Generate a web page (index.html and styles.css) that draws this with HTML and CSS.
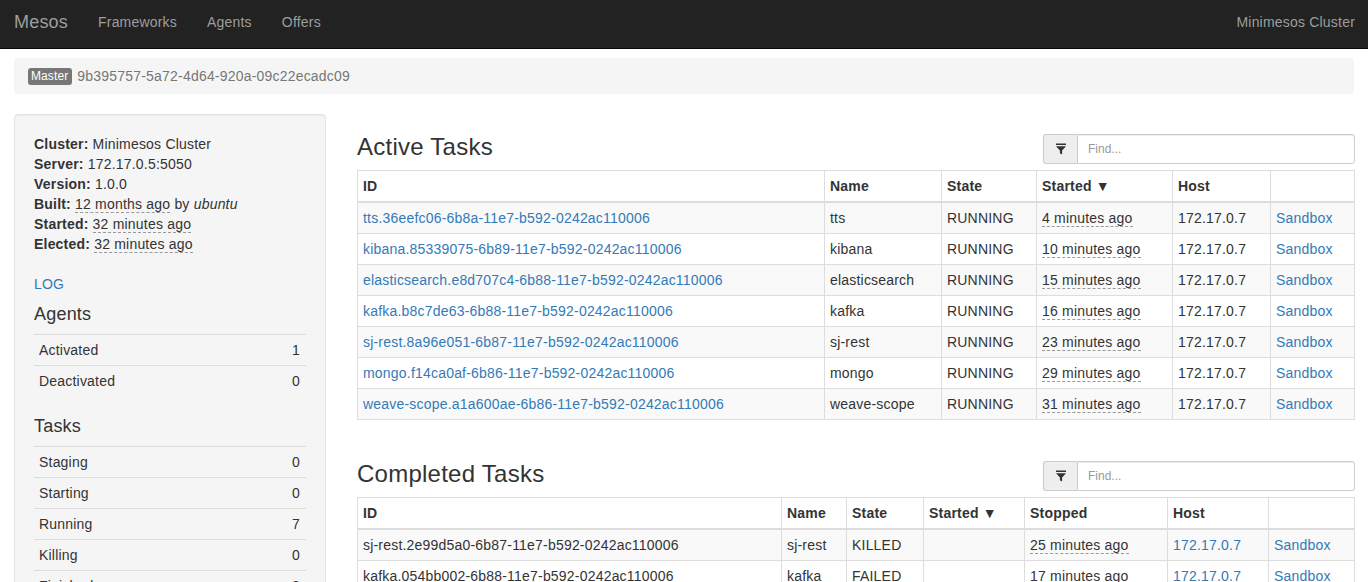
FILE: index.html
```html
<!DOCTYPE html>
<html lang="en">
<head>
<meta charset="utf-8">
<title>Mesos</title>
<link rel="stylesheet" href="styles.css">
</head>
<body>
<nav class="navbar">
  <div class="nav-left">
    <a class="brand" href="#">Mesos</a>
    <a class="nav-link" href="#">Frameworks</a>
    <a class="nav-link" href="#">Agents</a>
    <a class="nav-link" href="#">Offers</a>
  </div>
  <a class="nav-link nav-right" href="#">Minimesos Cluster</a>
</nav>

<div class="container">
  <div class="breadcrumb"><span class="label">Master</span> 9b395757-5a72-4d64-920a-09c22ecadc09</div>

  <div class="layout">
    <aside class="well">
      <dl class="info">
        <div><dt>Cluster:</dt> <dd>Minimesos Cluster</dd></div>
        <div><dt>Server:</dt> <dd>172.17.0.5:5050</dd></div>
        <div><dt>Version:</dt> <dd>1.0.0</dd></div>
        <div><dt>Built:</dt> <dd><span class="ts">12 months ago</span> by <em>ubuntu</em></dd></div>
        <div><dt>Started:</dt> <dd><span class="ts">32 minutes ago</span></dd></div>
        <div><dt>Elected:</dt> <dd><span class="ts">32 minutes ago</span></dd></div>
      </dl>
      <p class="log"><a href="#">LOG</a></p>
      <h4>Agents</h4>
      <table class="side-table">
        <tr><td>Activated</td><td class="num">1</td></tr>
        <tr><td>Deactivated</td><td class="num">0</td></tr>
      </table>
      <h4>Tasks</h4>
      <table class="side-table">
        <tr><td>Staging</td><td class="num">0</td></tr>
        <tr><td>Starting</td><td class="num">0</td></tr>
        <tr><td>Running</td><td class="num">7</td></tr>
        <tr><td>Killing</td><td class="num">0</td></tr>
        <tr><td>Finished</td><td class="num">0</td></tr>
        <tr><td>Killed</td><td class="num">1</td></tr>
        <tr><td>Failed</td><td class="num">1</td></tr>
        <tr><td>Lost</td><td class="num">0</td></tr>
      </table>
    </aside>

    <main class="main">
      <section class="task-section">
        <div class="section-head">
          <h3>Active Tasks</h3>
          <div class="input-group">
            <span class="addon"><svg width="12" height="12" viewBox="0 0 12 12"><path d="M1 0.5h10v1.6H1z M1 3.2h10L7.1 7.4V11.5L4.9 10.2V7.4z" fill="#333"/></svg></span>
            <input class="find" type="text" placeholder="Find...">
          </div>
        </div>
        <table class="tasks active">
          <colgroup><col class="c-id"><col class="c-name"><col class="c-state"><col class="c-started"><col class="c-host"><col class="c-sb"></colgroup>
          <thead><tr><th>ID</th><th>Name</th><th>State</th><th>Started ▼</th><th>Host</th><th></th></tr></thead>
          <tbody>
            <tr><td><a href="#">tts.36eefc06-6b8a-11e7-b592-0242ac110006</a></td><td>tts</td><td>RUNNING</td><td><span class="ts">4 minutes ago</span></td><td>172.17.0.7</td><td><a href="#">Sandbox</a></td></tr>
            <tr><td><a href="#">kibana.85339075-6b89-11e7-b592-0242ac110006</a></td><td>kibana</td><td>RUNNING</td><td><span class="ts">10 minutes ago</span></td><td>172.17.0.7</td><td><a href="#">Sandbox</a></td></tr>
            <tr><td><a href="#">elasticsearch.e8d707c4-6b88-11e7-b592-0242ac110006</a></td><td>elasticsearch</td><td>RUNNING</td><td><span class="ts">15 minutes ago</span></td><td>172.17.0.7</td><td><a href="#">Sandbox</a></td></tr>
            <tr><td><a href="#">kafka.b8c7de63-6b88-11e7-b592-0242ac110006</a></td><td>kafka</td><td>RUNNING</td><td><span class="ts">16 minutes ago</span></td><td>172.17.0.7</td><td><a href="#">Sandbox</a></td></tr>
            <tr><td><a href="#">sj-rest.8a96e051-6b87-11e7-b592-0242ac110006</a></td><td>sj-rest</td><td>RUNNING</td><td><span class="ts">23 minutes ago</span></td><td>172.17.0.7</td><td><a href="#">Sandbox</a></td></tr>
            <tr><td><a href="#">mongo.f14ca0af-6b86-11e7-b592-0242ac110006</a></td><td>mongo</td><td>RUNNING</td><td><span class="ts">29 minutes ago</span></td><td>172.17.0.7</td><td><a href="#">Sandbox</a></td></tr>
            <tr><td><a href="#">weave-scope.a1a600ae-6b86-11e7-b592-0242ac110006</a></td><td>weave-scope</td><td>RUNNING</td><td><span class="ts">31 minutes ago</span></td><td>172.17.0.7</td><td><a href="#">Sandbox</a></td></tr>
          </tbody>
        </table>
      </section>

      <section class="task-section">
        <div class="section-head">
          <h3>Completed Tasks</h3>
          <div class="input-group">
            <span class="addon"><svg width="12" height="12" viewBox="0 0 12 12"><path d="M1 0.5h10v1.6H1z M1 3.2h10L7.1 7.4V11.5L4.9 10.2V7.4z" fill="#333"/></svg></span>
            <input class="find" type="text" placeholder="Find...">
          </div>
        </div>
        <table class="tasks completed">
          <colgroup><col class="k-id"><col class="k-name"><col class="k-state"><col class="k-started"><col class="k-stopped"><col class="k-host"><col class="k-sb"></colgroup>
          <thead><tr><th>ID</th><th>Name</th><th>State</th><th>Started ▼</th><th>Stopped</th><th>Host</th><th></th></tr></thead>
          <tbody>
            <tr><td>sj-rest.2e99d5a0-6b87-11e7-b592-0242ac110006</td><td>sj-rest</td><td>KILLED</td><td></td><td><span class="ts">25 minutes ago</span></td><td><a href="#">172.17.0.7</a></td><td><a href="#">Sandbox</a></td></tr>
            <tr><td>kafka.054bb002-6b88-11e7-b592-0242ac110006</td><td>kafka</td><td>FAILED</td><td></td><td><span class="ts">17 minutes ago</span></td><td><a href="#">172.17.0.7</a></td><td><a href="#">Sandbox</a></td></tr>
          </tbody>
        </table>
      </section>
    </main>
  </div>
</div>
</body>
</html>
```

FILE: styles.css
```css
* { box-sizing: border-box; }
html, body { margin: 0; padding: 0; }
body {
  font-family: "Liberation Sans", Arial, sans-serif;
  font-size: 14px;
  line-height: 20px;
  letter-spacing: 0.2px;
  color: #333;
  background: #fff;
  overflow: hidden;
}
a { color: #337ab7; text-decoration: none; }

.navbar {
  display: flex;
  justify-content: space-between;
  align-items: flex-start;
  height: 49px;
  background: #222;
  border-bottom: 1px solid #080808;
  padding: 0 13px 0 0;
}
.nav-left { display: flex; align-items: flex-start; }
.brand {
  color: #9d9d9d;
  font-size: 18px;
  line-height: 20px;
  padding: 12px 15px 13px 14px;
}
.nav-link {
  color: #9d9d9d;
  padding: 12px 15px 13px 15px;
  line-height: 20px;
}
.nav-right { padding-right: 0; }

.container { padding: 9px 14px 0 14px; }

.breadcrumb {
  background: #f5f5f5;
  border-radius: 4px;
  padding: 8px 14px;
  height: 36px;
  color: #777;
  margin-bottom: 20px;
}
.label {
  display: inline-block;
  background: #777;
  color: #fff;
  font-size: 12px;
  line-height: 13px;
  letter-spacing: 0.1px;
  padding: 2px 4px 2px 3px;
  border-radius: 3px;
  vertical-align: 1px;
  margin-right: 1px;
}

.layout {
  display: grid;
  grid-template-columns: 312px 1fr;
  column-gap: 31px;
  align-items: start;
}

.well {
  background: #f5f5f5;
  border: 1px solid #e3e3e3;
  border-radius: 4px;
  box-shadow: inset 0 1px 1px rgba(0,0,0,.05);
  padding: 19px;
  min-height: 600px;
}
.info { margin: 0 0 20px 0; }
.info dt, .info dd { display: inline; margin: 0; }
.info dt { font-weight: bold; }
.ts { border-bottom: 1px dashed #999; }
.log { margin: 0 0 10px 0; }
.well h4 {
  font-size: 18px;
  font-weight: 500;
  line-height: 20px;
  margin: 0 0 10px 0;
}
.side-table {
  width: 100%;
  border-collapse: collapse;
  margin-bottom: 20px;
}
.side-table td {
  border-top: 1px solid #ddd;
  padding: 5px;
  line-height: 20px;
}
.side-table .num { text-align: right; padding-right: 6px; }

.main { padding-top: 20px; }
.task-section + .task-section { margin-top: 41px; }
.section-head {
  display: flex;
  justify-content: space-between;
  align-items: flex-start;
  margin-bottom: 6px;
  height: 30px;
}
.section-head h3 {
  margin: 0;
  font-size: 24px;
  font-weight: 500;
  line-height: 26px;
  letter-spacing: 0.25px;
}
.input-group {
  display: flex;
  width: 312px;
  height: 30px;
}
.addon {
  width: 34px;
  display: flex;
  align-items: center;
  justify-content: center;
  background: #eee;
  border: 1px solid #ccc;
  border-right: 0;
  border-radius: 3px 0 0 3px;
}
.find {
  flex: 1;
  min-width: 0;
  border: 1px solid #ccc;
  border-radius: 0 3px 3px 0;
  padding: 5px 10px;
  font-family: inherit;
  font-size: 12px;
  color: #555;
  background: #fff;
  box-shadow: inset 0 1px 1px rgba(0,0,0,.075);
}
.find::placeholder { color: #999; }

.tasks {
  width: 100%;
  table-layout: fixed;
  border-collapse: collapse;
  border: 1px solid #ddd;
}
.tasks th, .tasks td {
  border: 1px solid #ddd;
  padding: 5px;
  line-height: 20px;
  text-align: left;
  white-space: nowrap;
  overflow: hidden;
}
.tasks th { font-weight: bold; border-bottom-width: 2px; }
.tasks tbody tr:nth-child(odd) { background: #f9f9f9; }

.c-id { width: 467px; }
.c-name { width: 117px; }
.c-state { width: 95px; }
.c-started { width: 136px; }
.c-host { width: 98px; }
.c-sb { width: 84px; }

.k-id { width: 424px; }
.k-name { width: 65px; }
.k-state { width: 77px; }
.k-started { width: 101px; }
.k-stopped { width: 143px; }
.k-host { width: 101px; }
.k-sb { width: 86px; }
```
